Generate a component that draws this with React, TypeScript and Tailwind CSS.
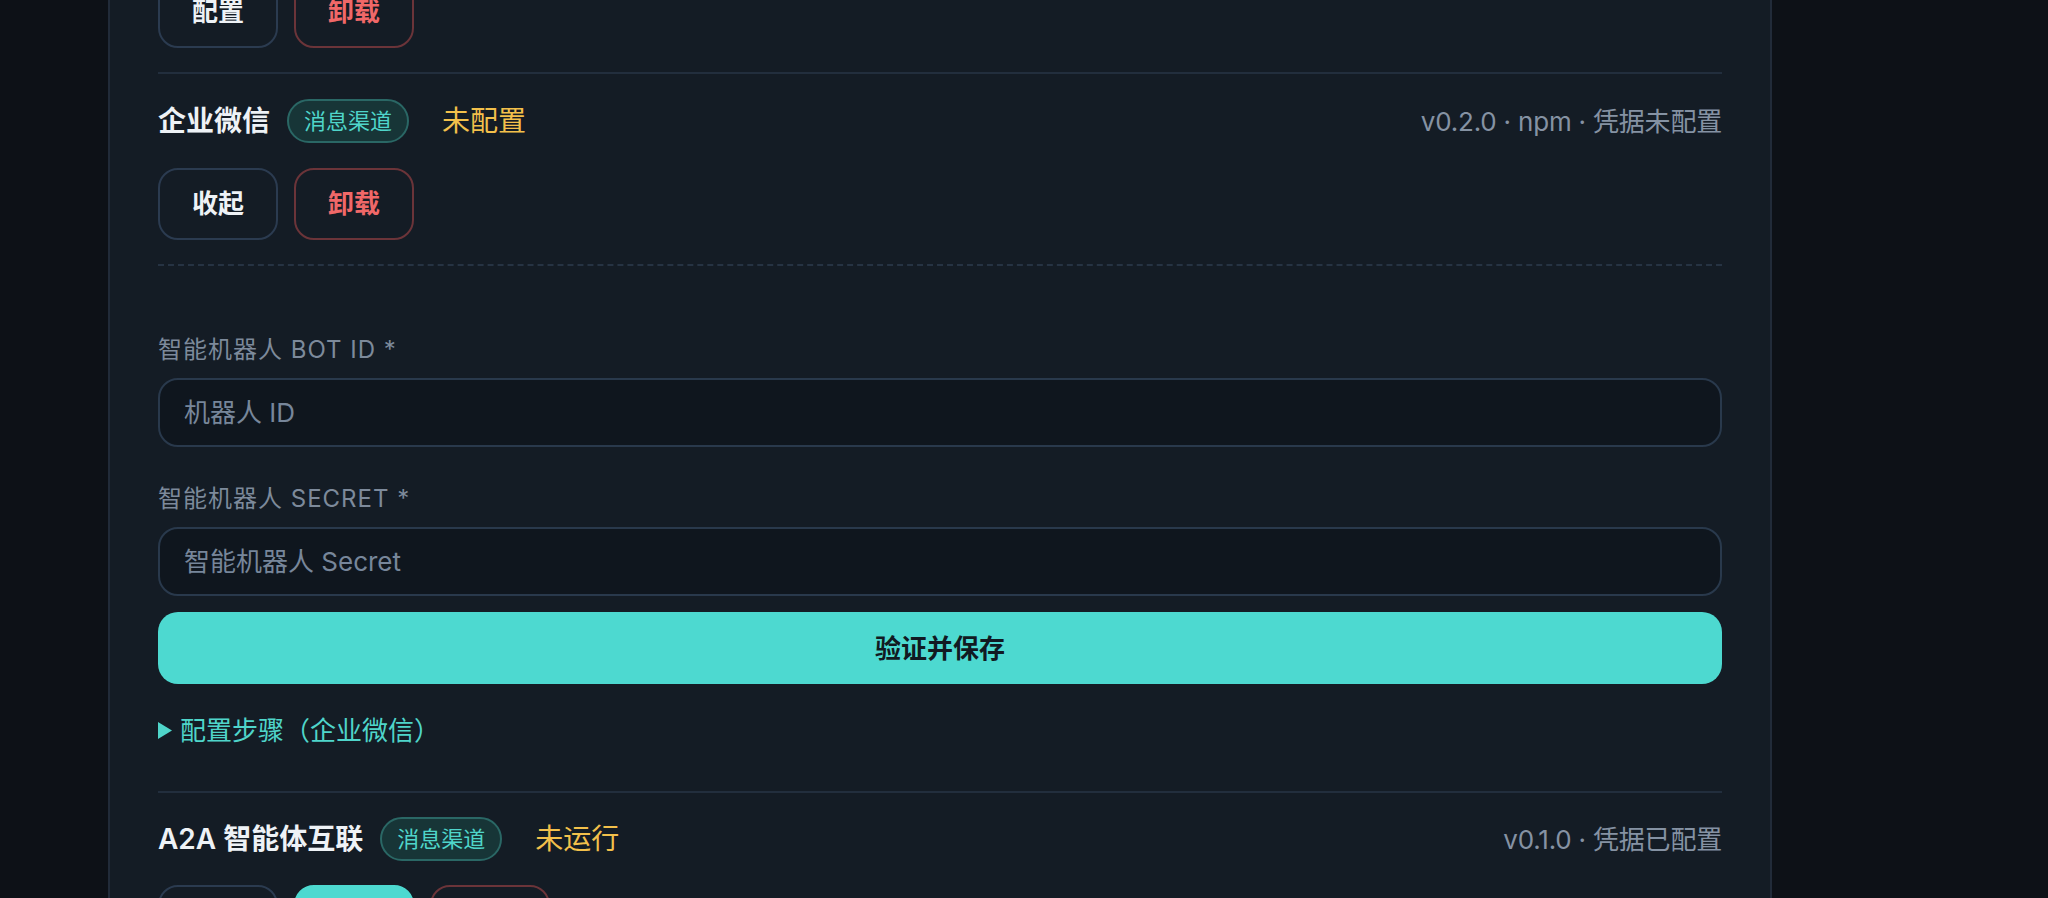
import React from "react";

type Tone = "ghost" | "danger" | "primary";

const TONE: Record<Tone, string> = {
  ghost: "border-[#2b3b50] text-[#eef2f6] bg-transparent",
  danger: "border-[#6b3439] text-[#f06868] bg-transparent",
  primary: "border-[#4dd9d0] text-[#0f1820] bg-[#4dd9d0]",
};

function ActionButton({ label, tone }: { label: string; tone: Tone }) {
  return (
    <button
      type="button"
      className={`h-[72px] shrink-0 rounded-[20px] border-2 px-[32px] text-[26px] font-semibold leading-none ${TONE[tone]}`}
    >
      {label}
    </button>
  );
}

function ChannelHeader({
  name,
  status,
  meta,
}: {
  name: string;
  status: string;
  meta: string;
}) {
  return (
    <div className="flex h-[44px] items-center">
      <span className="text-[28px] font-semibold text-[#eef2f6]">{name}</span>
      <span className="ml-[17px] flex h-[44px] items-center rounded-full border-2 border-[#2a6765] bg-[#173537] px-[15px] text-[22px] text-[#4fd5ca]">
        消息渠道
      </span>
      <span className="ml-[33px] text-[28px] text-[#f3c04b]">{status}</span>
      <span className="ml-auto text-[26px] tracking-[-0.2px] text-[#8592a3]">{meta}</span>
    </div>
  );
}

function Field({ label, placeholder }: { label: string; placeholder: string }) {
  return (
    <div className="flex flex-col gap-[12px]">
      <label className="text-[24px] leading-[32px] tracking-[1px] text-[#7d8a9b]">{label}</label>
      <input
        placeholder={placeholder}
        className="h-[69px] w-full shrink-0 rounded-[20px] border-2 border-[#29394c] bg-[#0f161e] px-[24px] text-[26px] text-[#eef2f6] outline-none placeholder:text-[#77869a]"
      />
    </div>
  );
}

export default function App() {
  return (
    <div className="h-[898px] w-full overflow-hidden bg-[#0d1117] pl-[108px] font-[family-name:Inter,Noto_Sans_CJK_SC,sans-serif]">
      <div className="flex h-full w-[1664px] flex-col border-x-2 border-[#212b39] bg-[#141c25] px-[48px] [&>*]:shrink-0">
        {/* previous channel, tail of its card */}
        <div className="-mt-[24px] flex gap-[16px]">
          <ActionButton label="配置" tone="ghost" />
          <ActionButton label="卸载" tone="danger" />
        </div>

        <div className="mt-[24px] h-[2px] w-full bg-[#222e3d]" />

        {/* 企业微信 */}
        <div className="mt-[25px]">
          <ChannelHeader name="企业微信" status="未配置" meta="v0.2.0 · npm · 凭据未配置" />
        </div>
        <div className="mt-[25px] flex gap-[16px]">
          <ActionButton label="收起" tone="ghost" />
          <ActionButton label="卸载" tone="danger" />
        </div>

        <div className="mt-[24px] w-full border-t-2 border-dashed border-[#263343]" />

        <div className="mt-[68px] flex flex-col gap-[36px]">
          <Field label="智能机器人 BOT ID *" placeholder="机器人 ID" />
          <Field label="智能机器人 SECRET *" placeholder="智能机器人 Secret" />
        </div>

        <button
          type="button"
          className="mt-[16px] h-[72px] w-full rounded-[20px] bg-[#4dd9d0] text-[26px] font-semibold text-[#111a22]"
        >
          验证并保存
        </button>

        <div className="mt-[28px] flex h-[36px] items-center gap-[8px] text-[26px] text-[#4fd5ca]">
          <svg width="14" height="17" viewBox="0 0 14 17" className="shrink-0">
            <polygon points="0,0 14,8.5 0,17" fill="#4fd5ca" />
          </svg>
          <span>配置步骤（企业微信）</span>
        </div>

        <div className="mt-[43px] h-[2px] w-full bg-[#222e3d]" />

        {/* A2A */}
        <div className="mt-[24px]">
          <ChannelHeader name="A2A 智能体互联" status="未运行" meta="v0.1.0 · 凭据已配置" />
        </div>
        <div className="mt-[24px] flex gap-[16px]">
          <ActionButton label="配置" tone="ghost" />
          <ActionButton label="启动" tone="primary" />
          <ActionButton label="卸载" tone="danger" />
        </div>
      </div>
    </div>
  );
}
